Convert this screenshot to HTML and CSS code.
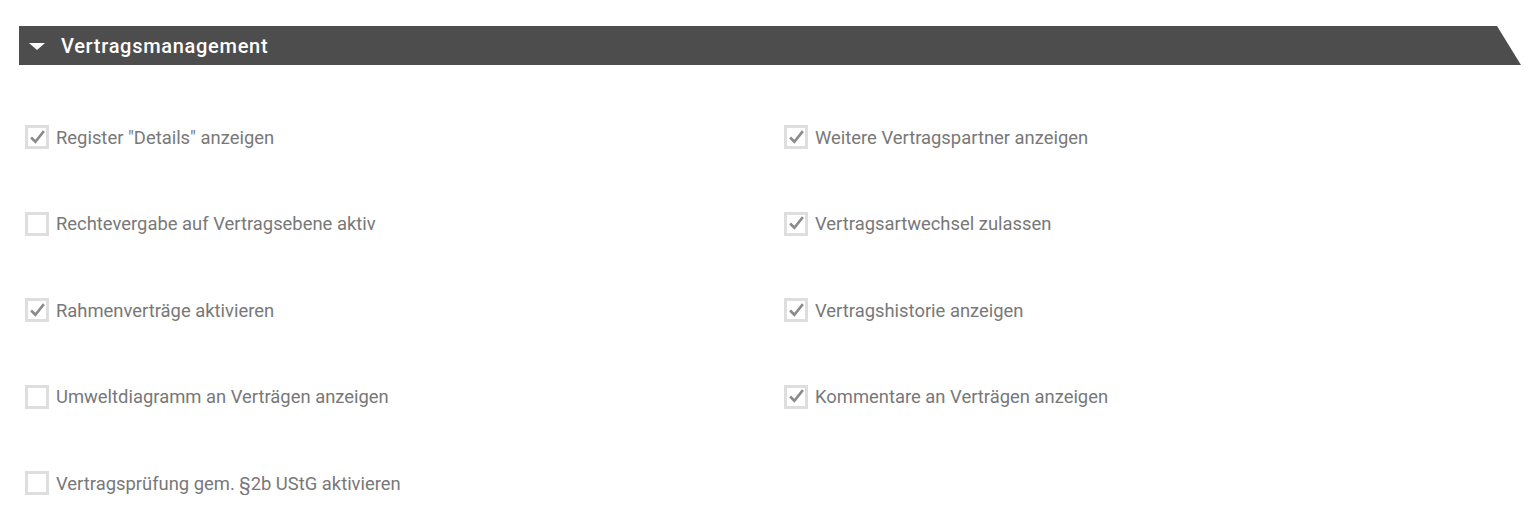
FILE: index.html
```html
<!DOCTYPE html>
<html lang="de">
<head>
  <meta charset="UTF-8" />
  <title>Vertragsmanagement</title>
  <link rel="stylesheet" href="styles.css">
</head>
<body>
  <div class="section">
    <div class="section-head">
      <span class="caret"></span>
      <span class="section-title">Vertragsmanagement</span>
    </div>

    <div class="optionen">
      <label class="option">
        <span class="box checked"><svg viewBox="0 0 24 24"><polyline points="3,12 9,18 21,3"/></svg></span>
        Register "Details" anzeigen
      </label>
      <label class="option">
        <span class="box checked"><svg viewBox="0 0 24 24"><polyline points="3,12 9,18 21,3"/></svg></span>
        Weitere Vertragspartner anzeigen
      </label>
      <label class="option">
        <span class="box"></span>
        Rechtevergabe auf Vertragsebene aktiv
      </label>
      <label class="option">
        <span class="box checked"><svg viewBox="0 0 24 24"><polyline points="3,12 9,18 21,3"/></svg></span>
        Vertragsartwechsel zulassen
      </label>
      <label class="option">
        <span class="box checked"><svg viewBox="0 0 24 24"><polyline points="3,12 9,18 21,3"/></svg></span>
        Rahmenverträge aktivieren
      </label>
      <label class="option">
        <span class="box checked"><svg viewBox="0 0 24 24"><polyline points="3,12 9,18 21,3"/></svg></span>
        Vertragshistorie anzeigen
      </label>
      <label class="option">
        <span class="box"></span>
        Umweltdiagramm an Verträgen anzeigen
      </label>
      <label class="option">
        <span class="box checked"><svg viewBox="0 0 24 24"><polyline points="3,12 9,18 21,3"/></svg></span>
        Kommentare an Verträgen anzeigen
      </label>
      <label class="option">
        <span class="box"></span>
        Vertragsprüfung gem. §2b UStG aktivieren
      </label>
    </div>
  </div>
</body>
</html>
```

FILE: styles.css
```css
body {
  font-family: Roboto, 'Liberation Sans', sans-serif;
  background-color: white;
  margin: 0;
  padding: 26px 18px 0 19px;
}

/* Kopfzeile */
.section-head {
  background-color: #4d4d4d;
  color: white;
  height: 39px;
  display: flex;
  align-items: center;
  padding-left: 10px;
  clip-path: polygon(0 0, calc(100% - 24px) 0, 100% 100%, 0 100%);
}
.caret {
  width: 0;
  height: 0;
  border-left: 8px solid transparent;
  border-right: 8px solid transparent;
  border-top: 7px solid white;
  margin-right: 16px;
  margin-top: 1px;
}
.section-title {
  font-size: 20px;
  font-weight: 500;
  letter-spacing: 0.7px;
}

/* Optionen */
.optionen {
  display: grid;
  grid-template-columns: 759px 1fr;
  row-gap: 62.5px;
  padding: 60px 0 0 6px;
}
.option {
  display: flex;
  align-items: center;
  gap: 7px;
  height: 24px;
  font-size: 18.4px;
  color: #787878;
  cursor: pointer;
}
.box {
  box-sizing: border-box;
  width: 24px;
  height: 24px;
  border: 3px solid #dedede;
  display: flex;
  align-items: center;
  justify-content: center;
  flex-shrink: 0;
}
.box svg {
  width: 17px;
  height: 17px;
}
.box polyline {
  fill: none;
  stroke: #8a8a8a;
  stroke-width: 3.6;
}
```
